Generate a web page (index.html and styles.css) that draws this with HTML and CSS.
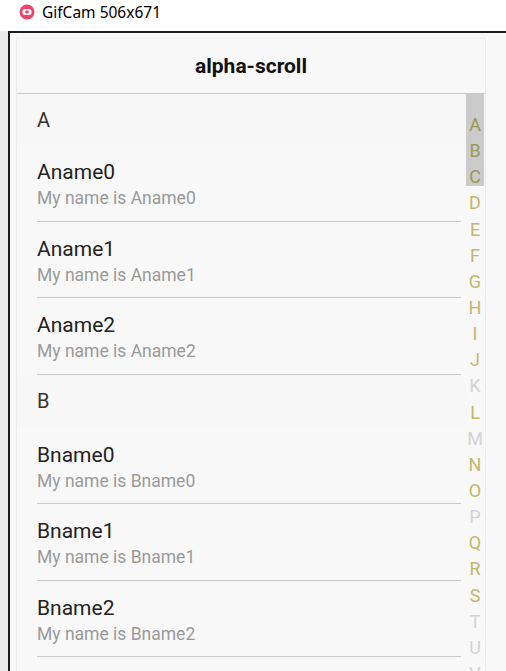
FILE: index.html
```html
<!DOCTYPE html>
<html>
<head>
<meta charset="utf-8">
<link rel="stylesheet" href="styles.css">
</head>
<body>
<div class="titlebar">
  <svg class="appicon" width="16" height="16" viewBox="0 0 16 16">
    <circle cx="8" cy="8" r="7.5" fill="#f0436b"/>
    <rect x="3.5" y="5" width="9" height="6" rx="2.5" fill="#fff"/>
    <circle cx="8" cy="8" r="1.8" fill="#f0436b"/>
  </svg>
  <span class="wintitle">GifCam 506x671</span>
</div>
<div class="shell">
  <div class="gutter"></div>
  <div class="frame">
    <div class="card">
      <div class="header">alpha-scroll</div>
      <div class="content">
        <div class="list">
          <div class="section first">A</div>
          <div class="item"><div class="name">Aname0</div><div class="desc">My name is Aname0</div></div>
          <div class="item"><div class="name">Aname1</div><div class="desc">My name is Aname1</div></div>
          <div class="item"><div class="name">Aname2</div><div class="desc">My name is Aname2</div></div>
          <div class="section">B</div>
          <div class="item"><div class="name">Bname0</div><div class="desc">My name is Bname0</div></div>
          <div class="item"><div class="name">Bname1</div><div class="desc">My name is Bname1</div></div>
          <div class="item"><div class="name">Bname2</div><div class="desc">My name is Bname2</div></div>
        </div>
        <div class="alpha">
          <div class="thumb"></div>
          <div class="letter on">A</div>
          <div class="letter on">B</div>
          <div class="letter on">C</div>
          <div class="letter">D</div>
          <div class="letter">E</div>
          <div class="letter">F</div>
          <div class="letter">G</div>
          <div class="letter">H</div>
          <div class="letter">I</div>
          <div class="letter">J</div>
          <div class="letter off">K</div>
          <div class="letter">L</div>
          <div class="letter off">M</div>
          <div class="letter">N</div>
          <div class="letter">O</div>
          <div class="letter off">P</div>
          <div class="letter">Q</div>
          <div class="letter">R</div>
          <div class="letter">S</div>
          <div class="letter off">T</div>
          <div class="letter off">U</div>
          <div class="letter off">V</div>
        </div>
      </div>
    </div>
  </div>
</div>
</body>
</html>
```
FILE: styles.css
```css
html, body {
  margin: 0;
  padding: 0;
  height: 671px;
  overflow: hidden;
  background: #ffffff;
}
.titlebar {
  height: 31px;
  display: flex;
  align-items: center;
  background: #ffffff;
  padding-left: 19px;
  box-sizing: border-box;
}
.appicon {
  display: block;
  margin-top: -7px;
}
.wintitle {
  margin-left: 7px;
  margin-top: -8px;
  font-family: "Noto Sans", "Liberation Sans", sans-serif;
  font-size: 15.5px;
  color: #000;
}
.shell {
  display: flex;
  height: 640px;
}
.gutter {
  width: 8px;
  background: #ececec;
  flex: none;
}
.frame {
  flex: 1;
  border-left: 2px solid #1c1c1c;
  border-top: 2px solid #1c1c1c;
  background: #f8f8f8;
  padding: 5px 0 0 6px;
  overflow: hidden;
}
.card {
  width: 470px;
  box-sizing: border-box;
  border: 1px solid #ececec;
  border-bottom: none;
  background: #f8f8f8;
  font-family: Roboto, "Noto Sans", sans-serif;
}
.header {
  height: 54px;
  display: flex;
  align-items: center;
  justify-content: center;
  font-weight: 700;
  font-size: 21px;
  color: #111;
  border-bottom: 1px solid #c8c8c8;
}
.content {
  display: flex;
}
.list {
  flex: 1;
  min-width: 0;
}
.section {
  height: 53px;
  box-sizing: border-box;
  padding-left: 20px;
  display: flex;
  align-items: center;
  font-size: 20px;
  color: #333;
  background: #f7f7f7;
}
.section.first {
  height: 51px;
}
.item {
  height: 76.5px;
  box-sizing: border-box;
  margin-left: 20px;
  margin-right: 5px;
  padding-top: 14px;
  border-bottom: 1px solid #c8c8c8;
}
.name {
  font-size: 21px;
  line-height: 26px;
  color: #222;
}
.desc {
  margin-top: 2px;
  font-size: 17.5px;
  line-height: 22px;
  color: #9a9a9a;
}
.alpha {
  position: relative;
  width: 18px;
  margin-right: 1px;
  padding-top: 18px;
  flex: none;
}
.thumb {
  position: absolute;
  left: 0;
  top: 0;
  width: 18px;
  height: 92px;
  background: #cbcbcb;
}
.letter {
  position: relative;
  height: 26.15px;
  line-height: 26.15px;
  text-align: center;
  font-size: 18px;
  color: #c2b86c;
}
.letter.on {
  color: #9d9758;
}
.letter.off {
  color: #d3d3d3;
}
```
